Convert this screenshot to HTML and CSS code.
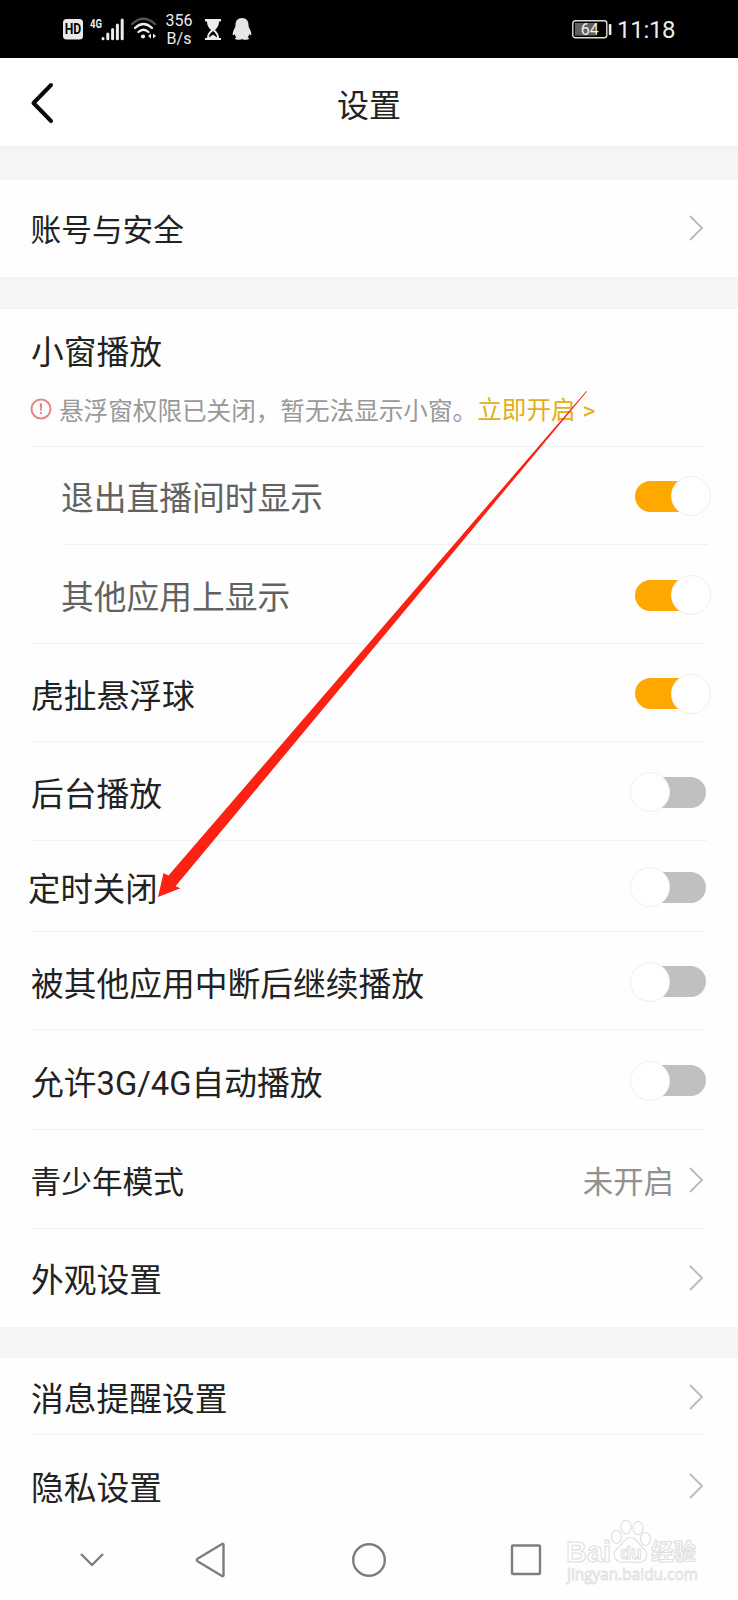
FILE: index.html
```html
<!DOCTYPE html>
<html lang="zh-CN">
<head>
<meta charset="utf-8">
<title>设置</title>
<link rel="stylesheet" href="styles.css">
</head>
<body>
<div class="screen">
  <div class="status">
    <svg class="hd" width="20" height="21" viewBox="0 0 20 21"><rect width="20" height="20.5" rx="3.5" fill="#e8e8e8"/><text x="10" y="15" text-anchor="middle" textLength="16.5" lengthAdjust="spacingAndGlyphs" class="hd-text">HD</text></svg>
    <svg class="signal" width="36" height="24" viewBox="0 0 36 24"><text x="1" y="11" textLength="12" lengthAdjust="spacingAndGlyphs" class="net-text">4G</text><g stroke="#ececec" stroke-width="3" stroke-linecap="round"><path d="M14 21.4v.4M18.8 17v4.8M23.6 12.500v9.300M28.400 8v13.800M33.200 3v18.800"/></g></svg>
    <svg class="wifi" width="26" height="24" viewBox="0 0 26 24" fill="none" stroke="#eee" stroke-width="2.300" stroke-linecap="round"><path d="M1 7Q12.500-3.500 24 7" stroke="#555"/><path d="M4 11Q12.500 3 21 11M7.500 15Q12.500 10.500 17.500 15"/><circle cx="12" cy="19.500" r="2.100" fill="#eee" stroke="none"/><path d="M20 16.500v5l-3-2.500zM22 16.500v5l3-2.500z" fill="#eee" stroke="none"/></svg>
    <div class="rate"><span>356</span><span>B/s</span></div>
    <svg class="hourglass" width="16" height="22" viewBox="0 0 16 22"><path d="M0 0h16v2.500h-2c0 4-1.500 6-4 8.500 2.500 2.500 4 4.500 4 8h2v2H0v-2h2c0-3.500 1.500-5.500 4-8C3.500 8.500 2 6.500 2 2.500H0z" fill="#ececec"/><path d="M4 18.500c0-3 1.500-4.500 4-6.500 2.500 2 4 3.500 4 6.500l-4-3z" fill="#000"/></svg>
    <svg class="qq" width="20" height="23" viewBox="0 0 20 23"><path d="M10 0c4.500 0 6.500 3 6.500 7 0 1.500.3 2 1 3.500 1 2 2 4 1.800 6-.2 1.200-1.200 1-2-.5-.3 1.500-.8 2.300-1.600 3.200 1 .5 1.300 1 1.300 1.800 0 .7-6.500 1.300-7 0-.5 1.300-7 .700-7 0 0-.8.3-1.300 1.300-1.800-.8-.9-1.300-1.700-1.600-3.200-.8 1.500-1.800 1.700-2 .5-.2-2 .8-4 1.800-6 .7-1.500 1-2 1-3.500 0-4 2-7 6.500-7z" fill="#e6e6e6"/></svg>
    <svg class="battery" width="40" height="19" viewBox="0 0 40 19"><rect x=".8" y=".8" width="34" height="17" rx="2.500" fill="#000" stroke="#ddd" stroke-width="1.400"/><rect x="3" y="3" width="20" height="12.600" fill="#606060"/><rect x="36.800" y="4" width="2.600" height="11" rx=".8" fill="#eee"/><text x="17.800" y="15.200" text-anchor="middle" class="level">64</text></svg>
    <span class="clock">11:18</span>
  </div>

  <header class="header">
    <svg width="24" height="42" viewBox="0 0 24 42" fill="none" stroke="#0a0a0a" stroke-width="4" stroke-linecap="round" stroke-linejoin="round"><path d="M21 3L3.500 21 21 39"/></svg>
    <h1 class="title">设置</h1>
  </header>
  <div class="gap first"></div>

  <div class="row account"><span class="label compact">账号与安全</span><svg class="chevron" viewBox="0 0 16 28"><path d="M2 2l12 12L2 26"/></svg></div>
  <div class="gap second"></div>

  <div class="window-head">
    <div class="label">小窗播放</div>
    <div class="notice">
      <svg width="22" height="22" viewBox="0 0 22 22"><circle cx="11" cy="11" r="9.500" fill="none" stroke="#e88484" stroke-width="2"/><path d="M10 5.500h2l-.4 7.500h-1.200z" fill="#e66"/><circle cx="11" cy="15" r="1" fill="#e66"/></svg>
      <span class="notice-text">悬浮窗权限已关闭，暂无法显示小窗。</span><span class="enable">立即开启<span class="gt">&gt;</span></span>
    </div>
  </div>

  <div class="list">
    <div class="row sub"><span class="label">退出直播间时显示</span><i class="switch on"></i></div>
    <div class="row sub last"><span class="label">其他应用上显示</span><i class="switch on"></i></div>
    <div class="row orb"><span class="label">虎扯悬浮球</span><i class="switch on"></i></div>
    <div class="row"><span class="label">后台播放</span><i class="switch"></i></div>
    <div class="row timer"><span class="label">定时关闭</span><i class="switch"></i></div>
    <div class="row resume"><span class="label">被其他应用中断后继续播放</span><i class="switch"></i></div>
    <div class="row mobile"><span class="label">允许<span class="latin">3G/4G</span>自动播放</span><i class="switch"></i></div>
    <div class="row"><span class="label compact">青少年模式</span><span class="value">未开启</span><svg class="chevron" viewBox="0 0 16 28"><path d="M2 2l12 12L2 26"/></svg></div>
    <div class="row look"><span class="label">外观设置</span><svg class="chevron" viewBox="0 0 16 28"><path d="M2 2l12 12L2 26"/></svg></div>
  </div>
  <div class="gap third"></div>
  <div class="list">
    <div class="row message"><span class="label">消息提醒设置</span><svg class="chevron" viewBox="0 0 16 28"><path d="M2 2l12 12L2 26"/></svg></div>
    <div class="row privacy"><span class="label">隐私设置</span><svg class="chevron" viewBox="0 0 16 28"><path d="M2 2l12 12L2 26"/></svg></div>
  </div>

  <nav class="nav">
    <svg width="28" height="36" viewBox="0 0 28 36"><path d="M3 12l11 11 11-11"/></svg>
    <svg width="32" height="36" viewBox="0 0 32 36"><path d="M28.500 2.500v31a1 1 0 0 1-1.500.5L2.500 19.200a1.400 1.400 0 0 1 0-2.400L27 2a1 1 0 0 1 1.500.5z"/></svg>
    <svg width="36" height="36" viewBox="0 0 36 36"><circle cx="18" cy="18" r="15.800"/></svg>
    <svg width="32" height="36" viewBox="0 0 32 36"><rect x="2" y="3.500" width="28" height="28.500" rx="1"/></svg>
  </nav>

  <svg class="pointer" width="738" height="1600" viewBox="0 0 738 1600"><path d="M158 897L163.500 873 168.500 875.500 586.300 391 587 391.500 175.500 886.300 180.500 888.300z" fill="#fb2213"/></svg>
  <svg class="watermark" width="140" height="70" viewBox="0 0 140 70">
    <g fill="#fff" stroke="#dedede" stroke-width="1.100">
      <text x="0" y="45.500" font-size="29" textLength="45" lengthAdjust="spacingAndGlyphs" class="brand">Bai</text>
      <ellipse cx="50.500" cy="21" rx="5" ry="6.500"/><ellipse cx="60" cy="11" rx="5" ry="6.700"/><ellipse cx="72" cy="12" rx="5" ry="6.700"/><ellipse cx="79.500" cy="23" rx="5" ry="6.500"/>
      <path d="M64.500 21.500c5 0 7 5.500 11 9 5 4 6.500 7 4.500 11.500-2.500 6-9.500 4-15.500 4s-13 2-15.500-4c-2-4.500-.5-7.500 4.500-11.500 4-3.500 6-9 11-9z"/>
      <text x="54.500" y="43" font-size="18" textLength="21" lengthAdjust="spacingAndGlyphs" class="brand">du</text>
      <text x="85" y="44" font-size="22.500" textLength="45" class="brand cn">经验</text>
    </g>
    <text x="1" y="63.500" textLength="131" lengthAdjust="spacingAndGlyphs" class="site">jingyan.baidu.com</text>
  </svg>
</div>
</body>
</html>
```
FILE: styles.css
```css
* { box-sizing: border-box; }
body { margin: 0; background: #fefefe; font-family: "Noto Sans CJK SC", "Noto Sans", sans-serif; color: #222; }
.screen { position: relative; width: 738px; height: 1600px; overflow: hidden; background: #fefefe; }

.status { display: flex; align-items: center; height: 58px; padding-left: 63px; background: #000; color: #ececec; font-family: Roboto, sans-serif; }
.status svg { display: block; flex: none; }
.hd-text { font: 700 14.5px Roboto, sans-serif; fill: #000; }
.net-text { font: 700 13px Roboto, sans-serif; fill: #ececec; }
.signal { margin-left: 6px; }
.wifi { margin-left: 6px; }
.rate { display: flex; flex-direction: column; align-items: center; width: 28px; margin-left: 8px; padding-top: 2px; font-size: 16px; line-height: 18.5px; }
.hourglass { margin-left: 12px; margin-top: 1px; }
.qq { margin-left: 11px; margin-top: 1px; }
.battery { margin-left: 320px; }
.level { font: 16px Roboto, sans-serif; fill: #eee; }
.clock { margin-left: 5px; font-size: 24px; line-height: 30px; padding-top: 2px; letter-spacing: -.3px; }

.header { display: grid; grid-template-columns: 24px 1fr 24px; align-items: center; height: 89px; padding: 2px 30px 0; border-bottom: 1px solid #ededed; background: #fff; }
.title { margin: 0; text-align: center; font-size: 32px; font-weight: 400; line-height: 40px; }

.gap { background: #f5f5f5; }
.first { height: 33px; }
.second { height: 32px; }
.third { height: 31px; }

.row { display: flex; align-items: center; height: 99px; margin-left: 31px; padding-right: 27px; border-bottom: 1px solid transparent; }
.list .row { background: linear-gradient(#f2f2f2, #f2f2f2) left bottom / 676px 1px no-repeat; }
.label { flex: 1; font-size: 32.75px; line-height: 46px; white-space: nowrap; }
.compact { font-size: 30.7px; margin-left: -.5px; }
.latin { font-family: Roboto, sans-serif; line-height: 1; }
.value { margin-right: 14px; font-size: 30.4px; color: #919191; line-height: 46px; }
.chevron { width: 16px; height: 28px; fill: none; stroke: #bdbdbd; stroke-width: 2; margin-right: 7px; }
.account { height: 97px; }

.window-head { height: 138px; margin-left: 31px; padding-top: 18px; background: linear-gradient(#f2f2f2, #f2f2f2) left bottom / 676px 1px no-repeat; }
.window-head .label { height: 47px; }
.notice { display: flex; align-items: center; margin-top: 19px; height: 32px; margin-left: -1px; font-size: 24.6px; line-height: 32px; white-space: nowrap; color: #999; }
.notice-text { margin-left: 7px; width: 418.200px; }
.enable { color: #e3ae1b; }
.gt { margin-left: 7px; font-family: Roboto, sans-serif; }

.list .sub { margin-left: 61px; background-position: 4px bottom; background-size: 643px 1px; color: #626262; }
/* The last nested row closes the group with a full-width divider. */
.list .last { margin-left: 31px; padding-left: 30px; background-position: left bottom; background-size: 676px 1px; }
.orb { height: 98px; }
.timer { height: 91px; }
.timer .label { margin-left: -3px; font-size: 32.4px; }
.resume { height: 98px; }
.mobile { height: 100px; }
.list .look { height: 97px; background: none; }
.message { height: 78px; }
.list .privacy { height: 100px; background: none; }

/* The knob is wider than the track and overhangs it at one end. */
.switch { position: relative; flex: none; width: 76px; height: 31px; margin-right: 5px; border-radius: 16px; background: linear-gradient(#c0c0c0, #c0c0c0) right / 50px 31px no-repeat; }
.switch::after { content: ""; position: absolute; box-sizing: border-box; left: 0; top: -4.500px; width: 40px; height: 40px; border-radius: 50%; border: 1.500px solid #efefef; background: #fff; }
.switch.on { margin-right: 0; background: linear-gradient(#ffa900, #ffa900) left / 50px 31px no-repeat; }
.switch.on::after { left: 36px; }

.nav { display: grid; grid-template-columns: 117px 156px 159px 32px; align-items: center; height: 60px; padding-left: 78px; margin-top: -6px; }
.nav svg { fill: none; stroke: #7e7e7e; stroke-width: 2.4; stroke-linejoin: round; }

.pointer { position: absolute; left: 0; top: 0; pointer-events: none; }
.watermark { position: absolute; left: 566px; top: 1516px; overflow: visible; }
.brand { font-family: "Liberation Sans", sans-serif; font-weight: 700; }
.cn { font-family: "Noto Sans CJK SC", sans-serif; }
.site { font: 17px "Open Sans", sans-serif; fill: #fff; stroke: #e0e0e0; stroke-width: .9px; }
```
